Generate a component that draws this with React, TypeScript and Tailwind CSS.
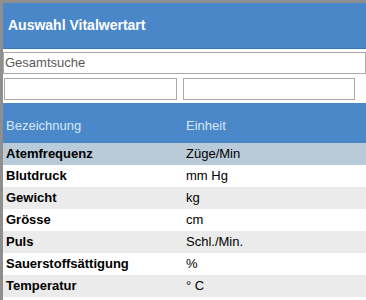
import React from "react";

const rows = [
  { name: "Atemfrequenz", unit: "Züge/Min" },
  { name: "Blutdruck", unit: "mm Hg" },
  { name: "Gewicht", unit: "kg" },
  { name: "Grösse", unit: "cm" },
  { name: "Puls", unit: "Schl./Min." },
  { name: "Sauerstoffsättigung", unit: "%" },
  { name: "Temperatur", unit: "° C" },
];

export default function App() {
  return (
    <div
      className="w-[366px] h-[300px] overflow-hidden bg-white border-t-[3px] border-l-[3px] border-[#8f8f8f] text-[13px]"
      style={{ fontFamily: '"Liberation Sans", Arial, sans-serif' }}
    >
      {/* title bar */}
      <div className="h-[46px] bg-[#4a87c8] flex items-center pl-[5px] border-b border-[#3d78b8]">
        <span className="text-white font-bold text-[14px]">Auswahl Vitalwertart</span>
      </div>

      <div className="pt-[3px]">
        <div className="h-[22px] border border-[#a8a8a8] flex items-center px-[1px] text-[#5a5a5a]">
          Gesamtsuche
        </div>
      </div>

      <div className="flex pt-[4px] pl-[1px]">
        <div className="w-[173px] h-[22px] border border-[#a8a8a8]" />
        <div className="w-[172px] h-[22px] border border-[#a8a8a8] ml-[6px]" />
      </div>

      {/* table header */}
      <div className="mt-[3px] h-[40px] bg-[#4a88c9] flex items-center pt-[5px] text-[#d8e8f8]">
        <div className="w-[180px] pl-[3px]">Bezeichnung</div>
        <div className="pl-[3px]">Einheit</div>
      </div>

      {rows.map((r, i) => (
        <div
          key={r.name}
          className={
            "h-[22px] flex items-center text-black " +
            (i === 0 ? "bg-[#b9cad9]" : i % 2 === 0 ? "bg-[#ebebeb]" : "bg-white")
          }
        >
          <div className="w-[180px] pl-[3px] font-bold">{r.name}</div>
          <div className="pl-[3px]">{r.unit}</div>
        </div>
      ))}
    </div>
  );
}
